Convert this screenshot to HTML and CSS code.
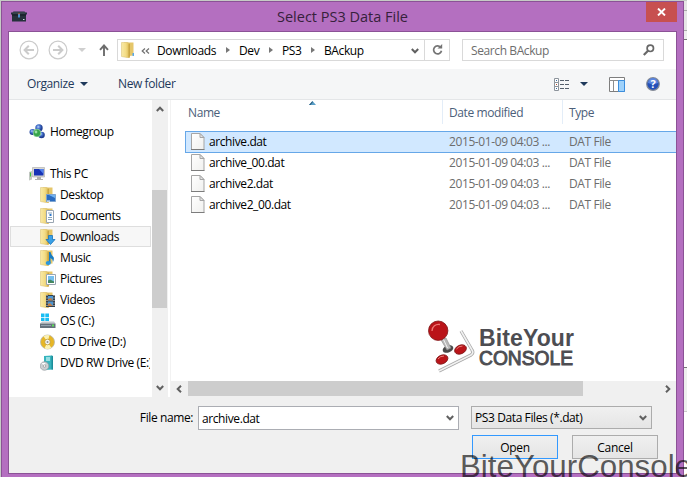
FILE: index.html
```html
<!DOCTYPE html>
<html lang="en">
  <head>
    <meta charset="UTF-8" />
    <meta name="viewport" content="width=device-width, initial-scale=1.0" />
    <title>Select PS3 Data File</title>
    <link rel="stylesheet" href="styles.css">
  </head>
  <body>
    <!-- shared icons -->
    <svg class="defs" width="0" height="0">
      <defs>
        <linearGradient id="gold" x1="0" x2="1">
          <stop offset="0" stop-color="#f8e9a6" />
          <stop offset="0.55" stop-color="#f3dc85" />
          <stop offset="1" stop-color="#d9b650" />
        </linearGradient>
        <linearGradient id="paper" x1="0" x2="1" y1="0" y2="1">
          <stop offset="0" stop-color="#fff" />
          <stop offset="1" stop-color="#f0f0ee" />
        </linearGradient>
        <radialGradient id="ball" cx="0.4" cy="0.35">
          <stop offset="0" stop-color="#b9d0f5" />
          <stop offset="0.5" stop-color="#4674cf" />
          <stop offset="1" stop-color="#203f92" />
        </radialGradient>
        <symbol id="folder" viewBox="0 0 16 16">
          <path d="M3 .5h9.500v13l-9.500 1z" fill="#e5c66a" />
          <path d="M.5 .5h6l2 1.200v14.300l-8-1.500z" fill="url(#gold)" stroke="#d9bd68" stroke-width=".5" />
          <path d="M7.500 2.500l1.500-1v13l-1.500 1z" fill="#c9a544" />
        </symbol>
        <symbol id="file" viewBox="0 0 14 17">
          <path d="M.5.500h8.500l4 4v12h-12.500z" fill="url(#paper)" stroke="#a5a5a5" />
          <path d="M9 .5v4h4z" fill="#e4e4e4" stroke="#a5a5a5" />
          <path d="M0 16.500h13.500" stroke="#7c7c7c" />
        </symbol>
        <symbol id="chevron" viewBox="0 0 8 6">
          <path d="M.8 1l3.200 3.300l3.200-3.300" fill="none" stroke="#606060" stroke-width="2" />
        </symbol>
      </defs>
    </svg>

    <div class="desktop">
      <div class="window">
        <div class="titlebar">
          <svg class="app-icon" width="16" height="11" viewBox="0 0 16 11">
            <path d="M0 1.500h1.500l1-1h11l1 1h1.500v2h-1v7h-14v-7h-1z" fill="#25313b" />
            <path d="M2 2h12" stroke="#46545d" />
            <path d="M1 4h14" stroke="#131b22" />
            <path d="M7 3h2v3.500h-2z" fill="#4a8fd0" />
            <path d="M7.500 2h1v1.500h-1z" fill="#d87040" />
            <path d="M12 8.500h1.500" stroke="#ccd6dd" />
          </svg>
          <h1 class="title">Select PS3 Data File</h1>
          <button class="close" aria-label="Close">
            <svg width="9" height="8" viewBox="0 0 9 8">
              <path d="M1 .5l7 7M8 .5l-7 7" stroke="#fff" stroke-width="1.900" />
            </svg>
          </button>
        </div>

        <div class="content">
          <div class="navbar">
            <svg class="nav-arrow" width="20" height="20" viewBox="0 0 20 20" fill="none" stroke="#cbcbcb">
              <circle cx="10" cy="10" r="8.900" stroke-width="1.200" />
              <path d="M15 10h-9M9.800 5.800l-4.200 4.200l4.200 4.200" stroke-width="2" />
            </svg>
            <svg class="nav-arrow forward" width="20" height="20" viewBox="0 0 20 20" fill="none" stroke="#cbcbcb">
              <circle cx="10" cy="10" r="8.900" stroke-width="1.200" />
              <path d="M5 10h9M10.200 5.800l4.200 4.200l-4.200 4.200" stroke-width="2" />
            </svg>
            <svg class="nav-recent" width="8" height="4" viewBox="0 0 8 4"><path d="M0 0h8l-4 4z" fill="#cfcfcf" /></svg>
            <svg class="nav-up" width="10" height="12" viewBox="0 0 10 12" fill="none" stroke="#6d6d6d">
              <path d="M5 12v-10M1 5.800l4-4.300l4 4.300" stroke-width="1.900" />
            </svg>
            <div class="address">
              <svg class="address-icon" width="16" height="16"><use href="#folder" /><path d="M11.500 11h1.500v3h-1.500z" fill="#58a8e8" /></svg>
              <svg class="more" width="9" height="6" viewBox="0 0 9 6" fill="none" stroke="#707070" stroke-width="1.200">
                <path d="M4 .5l-2.800 2.500l2.800 2.500M8 .5l-2.800 2.500l2.800 2.500" />
              </svg>
              <span class="crumb crumb-downloads">Downloads</span>
              <span class="crumb crumb-dev">Dev</span>
              <span class="crumb crumb-ps3">PS3</span>
              <span class="crumb crumb-last">BAckup</span>
              <svg class="address-drop" width="8" height="6"><use href="#chevron" /></svg>
              <span class="refresh">
                <svg width="11" height="12" viewBox="0 0 11 12">
                  <path d="M8.600 3.200a4 4 0 1 0 .9 3.600" fill="none" stroke="#747474" stroke-width="1.700" />
                  <path d="M5.500 4.600h4.700v-4.600z" fill="#747474" />
                </svg>
              </span>
            </div>
            <div class="search">
              <span>Search BAckup</span>
              <svg width="12" height="12" viewBox="0 0 12 12" fill="none" stroke="#686868">
                <circle cx="7.300" cy="4.300" r="3.200" stroke-width="1.700" />
                <path d="M5 6.800l-4.200 4.200" stroke-width="2.200" />
              </svg>
            </div>
          </div>

          <div class="toolbar">
            <span class="organize">Organize</span>
            <svg width="8" height="4" viewBox="0 0 8 4"><path d="M0 0h8l-4 4z" fill="#1e395b" /></svg>
            <span class="new-folder">New folder</span>
            <svg class="view-icon" width="15" height="13" viewBox="0 0 15 13">
              <g fill="#fff" stroke="#8d949c">
                <path d="M.5.500h4v4h-4zM.5 4.500h4v4h-4zM.5 8.500h4v4h-4z" />
              </g>
              <path d="M2 2.500h1M2 10.500h1" stroke="#3c6ea5" />
              <path d="M2 6.500h1" stroke="#b05030" />
              <path d="M6 2.500h4M11 2.500h4M6 6.500h4M11 6.500h4M6 10.500h4M11 10.500h4" stroke="#555f6b" />
            </svg>
            <svg class="view-drop" width="8" height="4" viewBox="0 0 8 4"><path d="M0 0h8l-4 4z" fill="#1e395b" /></svg>
            <svg class="pane-icon" width="16" height="15" viewBox="0 0 16 15">
              <path d="M.5.500h15v14h-15z" fill="#fff" stroke="#7e7e7e" />
              <path d="M0 3.500h16M4.500 3v11" stroke="#8e8e8e" />
              <path d="M9.500 3.500h6v11h-6z" fill="#9fd2fb" stroke="#3b8ede" />
            </svg>
            <svg class="help-icon" width="14" height="14" viewBox="0 0 14 14">
              <circle cx="7" cy="7" r="6.300" fill="#2450b8" stroke="#858b96" stroke-width="1.200" />
              <path d="M2 6a5 5 0 0 1 10 0q-5 2-10 0" fill="#5c86dd" />
              <text class="help-mark" x="7" y="11" text-anchor="middle">?</text>
            </svg>
          </div>

          <div class="main">
            <div class="sidebar">
              <ul class="tree">
                <li class="root homegroup">
                  <svg width="16" height="16" viewBox="0 0 16 16">
                    <circle cx="10" cy="4" r="3.700" fill="url(#ball)" />
                    <circle cx="3.500" cy="8" r="3" fill="url(#ball)" />
                    <circle cx="12.500" cy="11" r="3.300" fill="url(#ball)" />
                    <circle cx="8" cy="9" r="3.900" fill="#36a54b" stroke="#d5efdb" stroke-width=".5" />
                    <circle cx="7" cy="8" r="1.400" fill="#9bdfa5" />
                  </svg>Homegroup
                </li>
                <li class="root">
                  <svg width="16" height="16" viewBox="0 0 16 16">
                    <path d="M3.500 1.500h12v9.500h-12z" fill="#d8d8d3" stroke="#aaa" stroke-width=".6" />
                    <path d="M5 3h9.500v6.500h-9.500z" fill="#1733b5" />
                    <path d="M10 3h4.500v5z" fill="#5382ed" />
                    <path d="M8 11h4v2h2v1h-8v-1h2z" fill="#b1b1ad" />
                    <path d="M0 6l3-1v8.500l-3 1z" fill="#c1c7c1" />
                    <path d="M1.500 6.500v4" stroke="#43c83e" />
                  </svg>This PC
                </li>
                <li>
                  <svg width="16" height="16" viewBox="0 0 16 16">
                    <use href="#folder" />
                    <path d="M6.500 7.500h9v7h-9z" fill="#2a6bc0" stroke="#7da4cf" />
                    <path d="M9 8h6v3z" fill="#70b2f2" />
                    <path d="M7 14h3" stroke="#fff" />
                  </svg>Desktop
                </li>
                <li>
                  <svg width="16" height="16" viewBox="0 0 16 16">
                    <use href="#folder" />
                    <path d="M6.500 2.500h7v12h-7z" fill="#fff" stroke="#9aa6b2" />
                    <path d="M8 5h4M8 9.500h4M8 11.500h4" stroke="#87a4bd" />
                    <path d="M9.500 7h2" stroke="#2f79ca" stroke-width="2" />
                  </svg>Documents
                </li>
                <li class="current">
                  <svg width="16" height="16" viewBox="0 0 16 16">
                    <use href="#folder" />
                    <path d="M8.500 6.500h4v4h2.500l-4.500 5l-4.500-5h2.500z" fill="#39a0e6" stroke="#1674bd" stroke-width=".8" />
                  </svg>Downloads
                </li>
                <li>
                  <svg width="16" height="16" viewBox="0 0 16 16">
                    <use href="#folder" />
                    <path d="M9 2h1.500q.5 3 3 5q1 2-.5 5q0-3-2.500-4v5h-1.500z" fill="#187cc2" />
                    <ellipse cx="8.300" cy="13" rx="2.600" ry="2" fill="#2b97dc" />
                  </svg>Music
                </li>
                <li>
                  <svg width="16" height="16" viewBox="0 0 16 16">
                    <use href="#folder" />
                    <path d="M6.500 3.500h9v10h-9z" fill="#fff" stroke="#9aa6b2" />
                    <path d="M8 5h6v7h-6z" fill="#75bfee" />
                    <path d="M8 9.500l2-1l4 2v1.500h-6z" fill="#438760" />
                  </svg>Pictures
                </li>
                <li>
                  <svg width="16" height="16" viewBox="0 0 16 16">
                    <use href="#folder" />
                    <path d="M6 3h9v12h-9z" fill="#35414d" />
                    <path d="M8 4h5v4.500h-5zM8 9.500h5v4.500h-5z" fill="#4c96d3" />
                    <path d="M8 7l3-1l2 2.500h-5zM8 12l2-1l3 3h-5z" fill="#c27d43" />
                    <path d="M7 3v12M14 3v12" stroke="#ddd" stroke-dasharray="1 1.500" />
                  </svg>Videos
                </li>
                <li>
                  <svg width="16" height="16" viewBox="0 0 16 16">
                    <path d="M1 .5h3.500v3.500h-3.500zM5.300.500h3.700v3.500h-3.700zM1 4.800h3.500v3.200h-3.500zM5.300 4.800h3.700v3.200h-3.700z" fill="#18bdf3" />
                    <path d="M2 8.500h12l1.500 2h-15.500z" fill="#c4c9ce" />
                    <path d="M0 10.500h15.500v4.500h-15.500z" fill="#66727d" />
                    <path d="M1 12.500h10" stroke="#93a2ae" />
                    <path d="M12 12.500h2" stroke="#5de056" stroke-width="2" />
                  </svg>OS (C:)
                </li>
                <li>
                  <svg width="16" height="16" viewBox="0 0 16 16">
                    <circle cx="7.500" cy="8" r="7" fill="#e6b626" stroke="#b8b8ae" stroke-width=".8" />
                    <path d="M7.500 8l-4-5.800a7 7 0 0 1 6-1zM7.500 8l-3 6.200a7 7 0 0 0 7-.2z" fill="#fbf1b3" />
                    <circle cx="7.500" cy="8" r="2.800" fill="#f5f5f5" stroke="#b49122" stroke-width=".7" />
                    <circle cx="7.500" cy="8" r="1" fill="#8f8f8f" />
                  </svg>CD Drive (D:)
                </li>
                <li>
                  <svg width="16" height="16" viewBox="0 0 16 16">
                    <path d="M4 1l8-.5l1 .8v13.200l-9 .5z" fill="#37b4bd" />
                    <path d="M11.500.500l1.500.8v13.200h-1.500z" fill="#1c8d9a" />
                    <path d="M6 3h4M6 5h4" stroke="#b7edee" stroke-width="1.500" />
                    <circle cx="4.500" cy="11" r="4.300" fill="#ccd0d3" stroke="#8b9499" stroke-width=".6" />
                    <path d="M4.500 11l-3-3h4z" fill="#fff" />
                    <circle cx="4.500" cy="11" r="1.300" fill="#f8f8f8" stroke="#777" stroke-width=".5" />
                  </svg>DVD RW Drive (E:)
                </li>
              </ul>
              <div class="vscroll">
                <svg class="flip" width="8" height="6"><use href="#chevron" /></svg>
                <div class="vthumb"></div>
                <svg class="down" width="8" height="6"><use href="#chevron" /></svg>
              </div>
            </div>

            <div class="list">
              <div class="row header">
                <span>Name</span>
                <span>Date modified</span>
                <span>Type</span>
                <svg class="sort" width="7" height="4" viewBox="0 0 7 4"><path d="M0 4l3.500-4l3.500 4z" fill="#5a9fc7" /><path d="M0 4l3.500-4v1.500l-2 2.500z" fill="#25587b" /></svg>
              </div>
              <div class="row item selected">
                <span><svg width="14" height="17"><use href="#file" /></svg>archive.dat</span>
                <span>2015-01-09 04:03 ...</span>
                <span>DAT File</span>
              </div>
              <div class="row item">
                <span><svg width="14" height="17"><use href="#file" /></svg>archive_00.dat</span>
                <span>2015-01-09 04:03 ...</span>
                <span>DAT File</span>
              </div>
              <div class="row item">
                <span><svg width="14" height="17"><use href="#file" /></svg>archive2.dat</span>
                <span>2015-01-09 04:03 ...</span>
                <span>DAT File</span>
              </div>
              <div class="row item">
                <span><svg width="14" height="17"><use href="#file" /></svg>archive2_00.dat</span>
                <span>2015-01-09 04:03 ...</span>
                <span>DAT File</span>
              </div>

              <svg class="logo" width="148" height="54" viewBox="0 0 148 54">
                <path d="M33 11l11 19q2 3-1 5l-32 16" fill="none" stroke="#a9a9a9" stroke-width="3.200" />
                <path d="M33 11l11 19q2 3-1 5l-32 16" fill="none" stroke="#f1f1f1" stroke-width="1.600" />
                <ellipse cx="20" cy="29" rx="5.500" ry="3.500" fill="#4a4a4a" transform="rotate(-20 20 29)" />
                <path d="M13 20l5-2l5 10l-4 2z" fill="#b9b9b9" stroke="#8c8c8c" stroke-width=".6" />
                <path d="M15.500 19.500l4 8.500" stroke="#f3f3f3" />
                <circle cx="10.200" cy="10.700" r="9.700" fill="#ba1419" stroke="#7e1517" stroke-width=".8" />
                <path d="M4 11a6.500 6.500 0 0 1 8-6.500" fill="none" stroke="#ed7773" stroke-width="1.300" />
                <g fill="#ba1419" stroke="#7e1517" stroke-width=".8">
                  <ellipse cx="14" cy="39.500" rx="6.200" ry="4.300" transform="rotate(-25 14 39.500)" />
                  <ellipse cx="32.500" cy="29.500" rx="6.200" ry="4.300" transform="rotate(-25 32.500 29.500)" />
                </g>
                <path d="M10 39q2-3 6-3M28.500 29q2-3 6-3" fill="none" stroke="#ef7c76" />
                <text class="logo-bite" x="51" y="26" textLength="95">BiteYour</text>
                <text class="logo-console" x="51" y="44.500" textLength="94" lengthAdjust="spacingAndGlyphs">CONSOLE</text>
              </svg>

              <div class="hscroll">
                <svg class="left" width="8" height="6"><use href="#chevron" /></svg>
                <div class="hthumb"></div>
                <svg class="right" width="8" height="6"><use href="#chevron" /></svg>
              </div>
            </div>
          </div>

          <div class="footer">
            <label for="filename">File name:</label>
            <div class="combo filename">
              <input type="text" id="filename" value="archive.dat" />
              <svg width="8" height="6"><use href="#chevron" /></svg>
            </div>
            <div class="combo filter">
              <span>PS3 Data Files (*.dat)</span>
              <svg width="8" height="6"><use href="#chevron" /></svg>
            </div>
            <div class="buttons">
              <button class="btn primary">Open</button>
              <button class="btn">Cancel</button>
            </div>
          </div>
        </div>
      </div>
      <div class="behind"></div>
      <div class="watermark">BiteYourConsole</div>
    </div>
  </body>
</html>
```
FILE: styles.css
```css
* {
  box-sizing: border-box;
}
body {
  margin: 0;
  font-family: 'Open Sans', 'Noto Sans', sans-serif;
  font-size: 12px;
  letter-spacing: -0.4px;
  color: #000;
  overflow: hidden;
}
svg {
  display: block;
  flex: none;
}
.defs {
  position: absolute;
}
.desktop {
  position: relative;
  display: flex;
  width: 687px;
  height: 477px;
  padding: 1px 0 0 1px;
  background-color: #c6cbc6;
  overflow: hidden;
  white-space: nowrap;
}
.window {
  width: 683px;
  height: 480px;
  border: 1px solid #8b5296;
  background-color: #b46fc0;
  padding: 0 6px;
}
.behind {
  width: 3px;
  background: linear-gradient(#e6e6e6 0 9px, #aaa 9px 10px, #e6e6e6 10px 29px, #aaa 29px 30px, #eee 30px 38px, #777 38px 39px, #fff 39px 366px, #777 366px 367px, #eef0ee 367px 410px, #ccc 410px 411px, #fff 411px);
}

/* title */
.titlebar {
  display: grid;
  grid-template-columns: 40px 1fr 40px;
  height: 29px;
}
.app-icon {
  margin: 9px 0 0 3px;
}
.title {
  margin: 0;
  font-size: 14.5px;
  font-weight: normal;
  letter-spacing: 0;
  line-height: 29px;
  text-align: center;
  color: #36213b;
}
.close {
  display: flex;
  align-items: center;
  justify-content: center;
  width: 31px;
  height: 20px;
  margin-left: 9px;
  padding: 0;
  border: none;
  background-color: #c75050;
}
.content {
  width: 669px;
  height: 443px;
  border: 1px solid #8b5296;
  background-color: #fff;
}

/* address and search */
.navbar {
  display: flex;
  align-items: center;
  height: 37px;
  padding: 0 0 1px 10px;
}
.nav-arrow.forward {
  margin-left: 9px;
}
.nav-recent {
  margin-left: 10px;
}
.nav-up {
  margin-left: 13px;
}
.address {
  display: flex;
  align-items: center;
  width: 333px;
  height: 22px;
  margin-left: 8px;
  border: 1px solid #d9d9d9;
}
.address-icon {
  margin-left: 3px;
}
.more {
  margin: 1px 7px 0 4px;
}
.crumb {
  display: flex;
  align-items: center;
  height: 20px;
}
.crumb::after {
  content: '';
  margin-left: auto;
  border: 3.5px solid transparent;
  border-left: 4px solid #777;
  border-right: none;
}
.crumb-downloads {
  width: 73px;
  margin-right: 9px;
}
.crumb-dev {
  width: 34px;
  margin-right: 9px;
}
.crumb-ps3 {
  width: 33px;
  margin-right: 9px;
}
.crumb-last::after {
  display: none;
}
.address-drop {
  margin: 2px 5px 0 auto;
}
.refresh {
  display: flex;
  align-items: center;
  justify-content: center;
  width: 25px;
  height: 20px;
  border-left: 1px solid #d9d9d9;
}
.search {
  display: flex;
  align-items: center;
  justify-content: space-between;
  width: 202px;
  height: 22px;
  margin-left: 12px;
  padding: 0 8px;
  border: 1px solid #d9d9d9;
  color: #6d6d6d;
}

/* toolbar */
.toolbar {
  display: flex;
  align-items: center;
  height: 31px;
  padding-left: 18px;
  border-bottom: 1px solid #e4e6e8;
  background-color: #f5f6f7;
  color: #1e395b;
}
.toolbar span {
  padding-bottom: 1px;
}
.organize {
  width: 53px;
}
.new-folder {
  margin-left: 30px;
}
.view-icon {
  margin-left: auto;
}
.view-drop {
  margin: 0 21px 0 11px;
}
.help-icon {
  margin: 0 16px 0 21px;
}
.help-mark {
  font-size: 11px;
  font-weight: bold;
  fill: #fff;
}

/* folder tree */
.main {
  display: flex;
  height: 297px;
}
.sidebar {
  display: flex;
  width: 162px;
  border-right: 1px solid #f2f2f2;
}
.tree {
  width: 143px;
  margin: 0;
  padding: 21px 1px 0 1px;
  list-style: none;
  overflow: hidden;
}
.tree li {
  display: flex;
  align-items: center;
  gap: 4px;
  height: 21px;
  padding-left: 29px;
  border: 1px solid transparent;
  overflow: hidden;
}
.tree .root {
  padding-left: 18px;
  gap: 5px;
}
.tree .homegroup {
  margin-bottom: 21px;
}
.tree .current {
  border-color: #dedede;
  background-color: #f7f7f7;
}
.vscroll {
  display: flex;
  flex-direction: column;
  align-items: center;
  width: 16px;
  padding: 6px 0;
  background-color: #f0f0f0;
}
.vthumb {
  width: 15px;
  height: 118px;
  margin: 78px 1px 0 0;
  background-color: #cdcdcd;
}
.flip {
  transform: rotate(180deg);
}
.down {
  margin-top: auto;
}

/* file list */
.list {
  display: flex;
  flex-direction: column;
  width: 505px;
}
.row {
  display: grid;
  grid-template-columns: 257px 120px 1fr;
  margin-left: 14px;
}
.row span {
  display: flex;
  align-items: center;
  padding: 0 0 2px 6px;
  color: #6d6d6d;
}
.row span:first-child {
  gap: 4px;
  padding-left: 5px;
  color: #000;
}
.header {
  position: relative;
  height: 24px;
  margin-bottom: 7px;
}
.row.header span,
.row.header span:first-child {
  padding: 1px 0 0 6px;
  color: #4c607a;
}
.row.header span:first-child {
  padding-left: 3px;
}
.header span + span {
  border-left: 1px solid #e3edf8;
}
.sort {
  position: absolute;
  left: 124px;
  top: 1px;
}
.item {
  height: 21px;
  border: 1px solid transparent;
  border-right: none;
}
.item.selected {
  height: 22px;
  border-color: #66a7e8;
  background-color: #d1e8ff;
}
.logo {
  margin: 104px 0 0 257px;
}
.logo-bite {
  font-family: 'Liberation Sans', sans-serif;
  font-size: 23px;
  font-weight: bold;
  letter-spacing: 0;
  fill: #4d4d52;
}
.logo-console {
  font-family: 'Liberation Sans', sans-serif;
  font-size: 21px;
  letter-spacing: 0;
  fill: #4d4d52;
  stroke: #4d4d52;
  stroke-width: 1px;
}
.hscroll {
  display: flex;
  align-items: center;
  height: 16px;
  margin-top: auto;
  padding: 0 4px;
  background-color: #f0f0f0;
}
.hthumb {
  width: 395px;
  height: 15px;
  margin: 0 auto 1px 5px;
  background-color: #cdcdcd;
}
.left {
  transform: rotate(90deg);
}
.right {
  transform: rotate(-90deg);
}

/* file name, filter and buttons */
.footer {
  display: grid;
  grid-template-columns: 184px 261px 188px;
  grid-template-rows: 24px 25px;
  column-gap: 5px;
  row-gap: 5px;
  height: 76px;
  padding-top: 9px;
  background-color: #f0f0f0;
}
.footer label {
  line-height: 23px;
  text-align: right;
}
.combo {
  display: flex;
  align-items: center;
  justify-content: space-between;
  height: 24px;
  padding: 0 4px 0 3px;
  border: 1px solid #abadb3;
}
.filename {
  background-color: #fff;
}
.filename input {
  width: 230px;
  padding: 0;
  border: none;
  outline: none;
  font: inherit;
  letter-spacing: inherit;
}
.filter {
  height: 23px;
  margin-left: 7px;
  border-color: #acacac;
  background: linear-gradient(#f0f0f0, #e5e5e5);
}
.buttons {
  grid-column: 3;
  display: flex;
  gap: 14px;
  margin-left: 8px;
}
.btn {
  flex: none;
  width: 86px;
  height: 24px;
  padding: 0;
  border: 1px solid #acacac;
  background: linear-gradient(#f0f0f0, #e5e5e5);
  font: inherit;
  letter-spacing: -0.3px;
  color: #000;
}
.btn.primary {
  border-color: #3399ff;
}

/* text stamped over the corner of the window */
.watermark {
  position: absolute;
  left: 460px;
  top: 449px;
  font-family: 'Liberation Sans', sans-serif;
  font-size: 31.3px;
  letter-spacing: 0;
  line-height: 36px;
  color: rgba(0, 0, 0, 0.65);
}
```
